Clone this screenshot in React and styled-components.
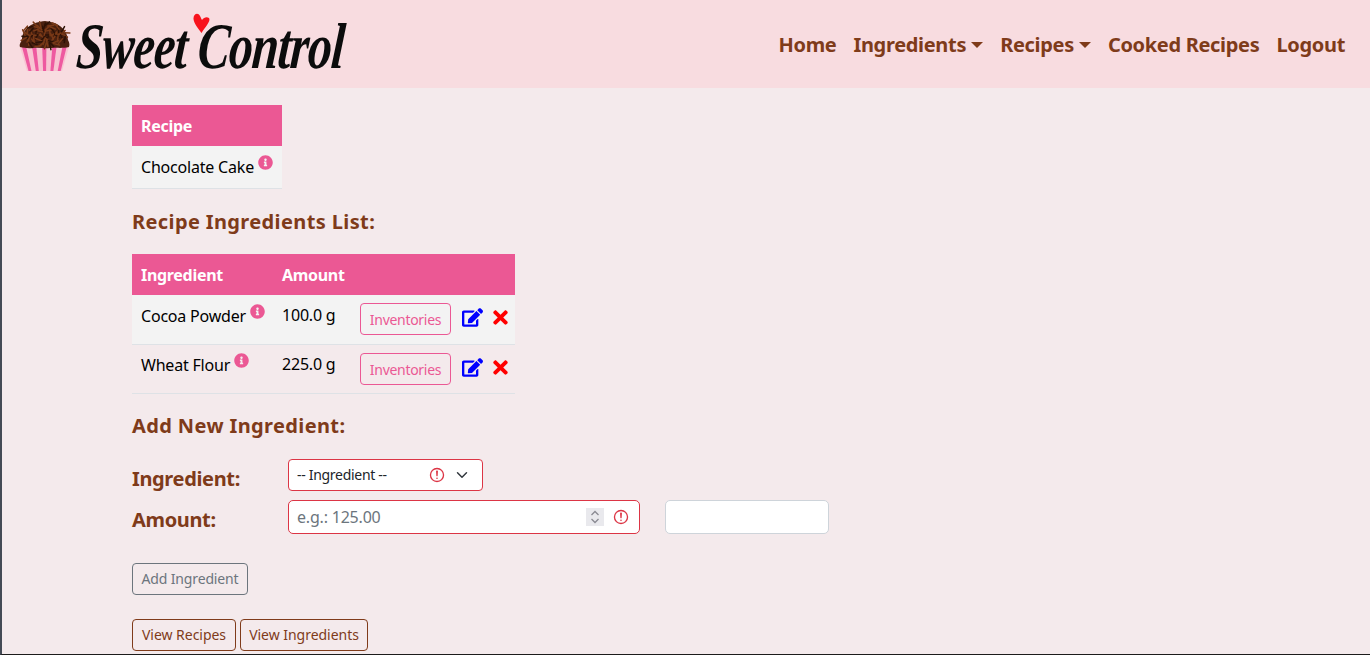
import React from 'react';
import styled, { createGlobalStyle } from 'styled-components';
import { FaEdit, FaTimes, FaInfoCircle } from 'react-icons/fa';

const FONT = '"Noto Sans", "Open Sans", sans-serif';
const BROWN = '#7f3b1a';
const PINK = '#eb5894';
const RED = '#dc3545';

const Global = createGlobalStyle`
  html, body { margin: 0; padding: 0; height: 655px; overflow: hidden; }
  body { font-family: ${FONT}; background: #f4eaec; }
  * { box-sizing: border-box; }
`;

const Page = styled.div`
  height: 655px;
  overflow: hidden;
  background: #f4eaec;
  border-left: 2px solid #444a55;
  border-bottom: 1px solid #1c1c1c;
`;

const NavBar = styled.nav`
  height: 88px;
  background: #f8dce0;
  display: flex;
  align-items: center;
  justify-content: space-between;
  padding: 0 25px 0 17px;
`;

const Brand = styled.div`
  display: flex;
  align-items: center;
  gap: 6px;
  position: relative;
  padding-top: 4px;
`;

const Wordmark = styled.span`
  font-family: "Liberation Serif", serif;
  font-style: italic;
  font-weight: 700;
  font-size: 48px;
  line-height: 52px;
  color: #0c0c0c;
  letter-spacing: -0.9px;
  white-space: nowrap;
  display: inline-block;
  transform: scaleY(1.35) skewX(-6deg);
`;

const Heart = styled.svg`
  position: absolute;
  left: 174px;
  top: -4px;
`;

const NavLinks = styled.div`
  display: flex;
  align-items: center;
  gap: 17px;
`;

const NavLink = styled.a`
  font-size: 20px;
  font-weight: 700;
  letter-spacing: -0.32px;
  color: ${BROWN};
  white-space: nowrap;
  ${p => p.$caret && `
    &::after {
      content: '';
      display: inline-block;
      margin-left: 5px;
      vertical-align: 4px;
      border-top: 6px solid ${BROWN};
      border-left: 6px solid transparent;
      border-right: 6px solid transparent;
    }
  `}
`;

const Main = styled.main`
  padding: 17px 0 0 130px;
`;

const Table = styled.table`
  border-collapse: collapse;
  font-size: 16px;
  color: #000;
  table-layout: fixed;
  width: ${p => p.$width}px;
`;

const Th = styled.th`
  background: ${PINK};
  color: #fff;
  font-weight: 700;
  text-align: left;
  height: 41px;
  padding: ${p => p.$pt || 0}px 9px 0;
  font-size: 16px;
  letter-spacing: -0.3px;
  width: ${p => (p.$w ? `${p.$w}px` : 'auto')};
`;

const Tr = styled.tr`
  background: ${p => (p.$odd ? '#f3f3f3' : 'transparent')};
  border-bottom: 1px solid #dee2e6;
`;

const Td = styled.td`
  padding: 0 9px ${p => p.$pb || 0}px;
  height: ${p => p.$h}px;
  letter-spacing: -0.2px;
  white-space: nowrap;
`;

const Info = styled(FaInfoCircle)`
  color: ${PINK};
  font-size: 15px;
  margin-left: 4px;
  vertical-align: 3px;
`;

const Actions = styled.div`
  display: flex;
  align-items: center;
`;

const InvButton = styled.button`
  flex: none;
  font-family: ${FONT};
  font-size: 14px;
  letter-spacing: -0.3px;
  width: 91px;
  height: 32px;
  padding: 0;
  color: ${PINK};
  background: transparent;
  border: 1px solid ${PINK};
  border-radius: 4px;
`;

const Edit = styled(FaEdit)`
  flex: none;
  color: #0000ff;
  font-size: 21px;
  margin: -3px 0 0 11px;
`;

const Del = styled(FaTimes)`
  flex: none;
  color: #ff0000;
  font-size: 21px;
  margin: -3px 0 0 7px;
`;

const Heading = styled.h2`
  margin: ${p => p.$m};
  font-size: 20px;
  line-height: 24px;
  font-weight: 700;
  letter-spacing: 0.38px;
  color: ${BROWN};
`;

const Form = styled.form`
  display: grid;
  grid-template-columns: 156px 352px 25px 164px;
  row-gap: 9px;
  margin-top: 21px;
  align-items: center;
`;

const Label = styled.label`
  font-size: 20px;
  line-height: 24px;
  font-weight: 700;
  letter-spacing: -0.35px;
  color: ${BROWN};
  padding-top: ${p => p.$pt || 0}px;
`;

const chevron = `url("data:image/svg+xml,%3csvg xmlns='http://www.w3.org/2000/svg' viewBox='0 0 16 16'%3e%3cpath fill='none' stroke='%23343a40' stroke-linecap='round' stroke-linejoin='round' stroke-width='2' d='m2 5 6 6 6-6'/%3e%3c/svg%3e")`;
const alertIcon = `url("data:image/svg+xml,%3csvg xmlns='http://www.w3.org/2000/svg' viewBox='0 0 12 12' width='12' height='12' fill='none' stroke='%23dc3545'%3e%3ccircle cx='6' cy='6' r='4.9'/%3e%3cpath stroke-linejoin='round' d='M5.8 3.2h.4L6 6.5z'/%3e%3ccircle cx='6' cy='8.4' r='.6' fill='%23dc3545' stroke='none'/%3e%3c/svg%3e")`;

const Select = styled.select`
  appearance: none;
  width: 195px;
  height: 32px;
  font-family: ${FONT};
  font-size: 14px;
  letter-spacing: -0.3px;
  color: #212529;
  padding: 0 8px 2px;
  background-color: #fff;
  background-image: ${chevron}, ${alertIcon};
  background-repeat: no-repeat;
  background-position: right 14px center, right 37px center;
  background-size: 12px 12px, 16px 16px;
  border: 1px solid ${RED};
  border-radius: 4px;
`;

const InputShell = styled.div`
  width: 352px;
  height: 34px;
  display: flex;
  align-items: center;
  background: #fff;
  border: 1px solid ${RED};
  border-radius: 5px;
  padding: 0 10px 0 8px;
`;

const Input = styled.input`
  flex: 1;
  min-width: 0;
  padding: 0;
  border: 0;
  outline: 0;
  background: transparent;
  font-family: ${FONT};
  font-size: 16px;
  letter-spacing: -0.2px;
  color: #212529;
  &::placeholder { color: #6c757d; opacity: 1; }
`;

const PlainInput = styled.input`
  width: 164px;
  height: 34px;
  background: #fff;
  border: 1px solid #ced4da;
  border-radius: 5px;
`;

const Spinner = styled.svg`
  display: block;
  background: #e9e9ed;
`;

const Alert = styled.svg`
  display: block;
  margin-left: 9px;
`;

const AddButton = styled.button`
  display: block;
  margin: 29px 0 0 0;
  width: 116px;
  height: 32px;
  padding: 0 0 2px;
  font-family: ${FONT};
  font-size: 14px;
  letter-spacing: -0.15px;
  color: #6c757d;
  background: transparent;
  border: 1px solid #6c757d;
  border-radius: 4px;
`;

const LinkRow = styled.div`
  display: flex;
  gap: 4px;
  margin-top: 24px;
`;

const LinkButton = styled.button`
  height: 32px;
  width: ${p => p.$w}px;
  padding: 0 0 2px;
  font-family: ${FONT};
  font-size: 14px;
  letter-spacing: -0.03px;
  color: ${BROWN};
  background: transparent;
  border: 1px solid ${BROWN};
  border-radius: 4px;
`;

const sprinkles = Array.from({ length: 70 }, (_, i) => {
  const a = (i * 137.5 * Math.PI) / 180;
  const r = Math.sqrt((i + 0.5) / 70);
  const cx = 25.5 + Math.cos(a) * r * 23;
  const cy = 15 + Math.sin(a) * r * 12.5;
  const t = (i * 53 * Math.PI) / 180;
  return {
    x1: cx - Math.cos(t) * 3,
    y1: cy - Math.sin(t) * 3,
    x2: cx + Math.cos(t) * 3,
    y2: cy + Math.sin(t) * 3,
  };
});

const stripes = [0, 1, 2, 3, 4];

function Cupcake() {
  return (
    <svg width="52" height="52" viewBox="0 0 52 52" aria-hidden="true">
      <path d="M1 27 L50 27 L43 51 L8 51 Z" fill="#f8c4d2" />
      {stripes.map(i => {
        const top = 3 + i * 10.1;
        const bottom = 9.5 + i * 7.3;
        return (
          <path
            key={i}
            d={`M${top} 27 L${top + 4.2} 27 L${bottom + 3} 51 L${bottom} 51 Z`}
            fill="#ee5aa0"
          />
        );
      })}
      <path
        d="M1 27 C0 24 2 22 3 20 C3 9 13 2 26 1 C39 2 48 9 49 20 C50 22 51 24 50 27 C44 28.5 38 27.5 33 28 C26 28.5 20 27.5 14 28 C9 28.5 5 28 1 27 Z"
        fill="#4a2110"
      />
      {sprinkles.map((s, i) => (
        <line key={i} {...s} stroke={i % 3 ? '#7a3a18' : '#2d1206'} strokeWidth="1.5" strokeLinecap="round" />
      ))}
    </svg>
  );
}

function Logo() {
  return (
    <Brand>
      <Cupcake />
      <Wordmark>Sweet Control</Wordmark>
      <Heart width="17" height="21" viewBox="0 0 17 21" aria-hidden="true">
        <path
          d="M8.5 21 C5 16 1 12 .5 7 C.2 2 5 0 7 4 C8 6 8.5 7 9 8 C11 5 14 4.5 16 6 C18 9 13 14 8.5 21 Z"
          fill="#f8131d"
        />
      </Heart>
    </Brand>
  );
}

function AlertIcon() {
  return (
    <Alert width="16" height="16" viewBox="0 0 12 12" fill="none" stroke={RED} aria-hidden="true">
      <circle cx="6" cy="6" r="4.9" strokeWidth="1" />
      <path strokeLinejoin="round" d="M5.8 3.2h.4L6 6.5z" />
      <circle cx="6" cy="8.4" r=".6" fill={RED} stroke="none" />
    </Alert>
  );
}

const rows = [
  { name: 'Cocoa Powder', amount: '100.0 g', odd: true, h: 50, pb: 8 },
  { name: 'Wheat Flour', amount: '225.0 g', odd: false, h: 49, pb: 10 },
];

export default function App() {
  return (
    <>
      <Global />
      <Page>
        <NavBar>
          <Logo />
          <NavLinks>
            <NavLink>Home</NavLink>
            <NavLink $caret>Ingredients</NavLink>
            <NavLink $caret>Recipes</NavLink>
            <NavLink>Cooked Recipes</NavLink>
            <NavLink>Logout</NavLink>
          </NavLinks>
        </NavBar>
        <Main>
          <Table $width={150}>
            <thead>
              <tr><Th>Recipe</Th></tr>
            </thead>
            <tbody>
              <Tr $odd>
                <Td $h={42}>Chocolate Cake<Info /></Td>
              </Tr>
            </tbody>
          </Table>

          <Heading $m="21px 0 20px">Recipe Ingredients List:</Heading>

          <Table $width={383}>
            <thead>
              <tr>
                <Th $w={141} $pt={2}>Ingredient</Th>
                <Th $w={78} $pt={2}>Amount</Th>
                <Th />
              </tr>
            </thead>
            <tbody>
              {rows.map(r => (
                <Tr key={r.name} $odd={r.odd}>
                  <Td $h={r.h} $pb={r.pb}>{r.name}<Info /></Td>
                  <Td $h={r.h} $pb={r.pb}>{r.amount}</Td>
                  <Td $h={r.h}>
                    <Actions>
                      <InvButton type="button">Inventories</InvButton>
                      <Edit />
                      <Del />
                    </Actions>
                  </Td>
                </Tr>
              ))}
            </tbody>
          </Table>

          <Heading $m="20px 0 0">Add New Ingredient:</Heading>

          <Form>
            <Label $pt={8}>Ingredient:</Label>
            <Select defaultValue="">
              <option value="">-- Ingredient --</option>
            </Select>
            <span />
            <span />
            <Label $pt={6}>Amount:</Label>
            <InputShell>
              <Input placeholder="e.g.: 125.00" />
              <Spinner width="18" height="18" viewBox="0 0 18 18" fill="none" stroke="#8a8a92" strokeWidth="1.3" aria-hidden="true">
                <path d="M5.5 7 9 3.5 12.5 7M5.5 11 9 14.5 12.5 11" />
              </Spinner>
              <AlertIcon />
            </InputShell>
            <span />
            <PlainInput />
          </Form>

          <AddButton type="button">Add Ingredient</AddButton>

          <LinkRow>
            <LinkButton type="button" $w={104}>View Recipes</LinkButton>
            <LinkButton type="button" $w={128}>View Ingredients</LinkButton>
          </LinkRow>
        </Main>
      </Page>
    </>
  );
}
